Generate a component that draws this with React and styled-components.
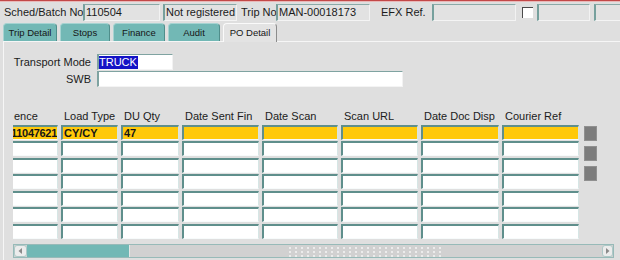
import React from "react";
import styled, { createGlobalStyle } from "styled-components";

const Global = createGlobalStyle`
  html, body { margin: 0; padding: 0; background: #dfdfdf; }
  body {
    width: 620px; height: 260px; overflow: hidden;
    font-family: "Liberation Sans", Arial, sans-serif;
  }
`;

const COLS = "45px 57px 58px 77px 76px 77px 78px 77px";

const Screen = styled.div`
  width: 620px;
  height: 260px;
  overflow: hidden;
  box-sizing: border-box;
  background: #dfdfdf;
  border-top: 1px solid #c24848;
  box-shadow: inset 0 1px 0 #e9b8b8;
  color: #1b1b1b;
  font-size: 11px;
`;

const TopBar = styled.div`
  display: flex;
  align-items: center;
  height: 17px;
  padding: 3px 0 0 4px;
  white-space: nowrap;
`;

const Label = styled.span`
  flex: none;
  width: ${(p) => p.$w}px;
  margin-left: ${(p) => p.$ml || 0}px;
  line-height: 17px;
  overflow: hidden;
`;

const Field = styled.div`
  flex: none;
  box-sizing: border-box;
  width: ${(p) => p.$w}px;
  margin-left: ${(p) => p.$ml || 0}px;
  height: 17px;
  padding-left: 1px;
  line-height: 15px;
  background: #e2e2e2;
  border-top: 1px solid #8aaaa8;
  border-left: 2px solid #76a09d;
  border-right: 1px solid #f2f2f2;
  border-bottom: 1px solid #f4f4f4;
  overflow: hidden;
`;

const Check = styled.div`
  flex: none;
  box-sizing: border-box;
  width: 11px;
  height: 11px;
  margin-left: ${(p) => p.$ml}px;
  background: #fff;
  border-top: 1px solid #4a4a4a;
  border-left: 1px solid #4a4a4a;
`;

const TabStrip = styled.div`
  display: flex;
  align-items: flex-end;
  gap: 3px;
  height: 18px;
  margin-top: 2px;
  padding-left: 3px;
`;

const Tab = styled.div`
  flex: none;
  box-sizing: border-box;
  width: ${(p) => p.$w}px;
  height: ${(p) => (p.$active ? 19 : 18)}px;
  margin-bottom: ${(p) => (p.$active ? -1 : 0)}px;
  border-radius: 4px 4px 0 0;
  background: ${(p) => (p.$active ? "#e3e3e3" : "#72b8b5")};
  border-top: 1px solid ${(p) => (p.$active ? "#fafafa" : "#a6d3d1")};
  border-left: 1px solid ${(p) => (p.$active ? "#fafafa" : "#a6d3d1")};
  border-right: 1px solid ${(p) => (p.$active ? "#8c8c8c" : "#4f8e8b")};
  display: flex;
  align-items: center;
  justify-content: center;
  font-size: 9.5px;
  color: #161616;
  padding-bottom: ${(p) => (p.$active ? 1 : 0)}px;
`;

const Panel = styled.div`
  margin-left: 3px;
  height: 240px;
  border-top: 1px solid #f6f6f6;
  border-left: 1px solid #f6f6f6;
`;

const Form = styled.div`
  display: grid;
  grid-template-columns: 87px auto;
  grid-auto-rows: 16px;
  column-gap: 6px;
  row-gap: 1px;
  margin-top: 12px;
`;

const FormLabel = styled.span`
  text-align: right;
  line-height: 16px;
  white-space: nowrap;
`;

const Input = styled.div`
  box-sizing: border-box;
  width: ${(p) => p.$w}px;
  height: 16px;
  background: #fff;
  border-top: 1px solid #7fa3a1;
  border-left: 2px solid #7fa3a1;
  border-right: 1px solid #f2f2f2;
  border-bottom: 1px solid #f4f4f4;
  padding-top: 1px;
  line-height: 13px;
`;

const Selected = styled.span`
  display: inline-block;
  background: #1313c6;
  color: #fff;
  padding-right: 1px;
`;

const Table = styled.div`
  margin: 21px 0 0 9px;
`;

const HeaderRow = styled.div`
  display: grid;
  grid-template-columns: ${COLS};
  column-gap: 3px;
  height: 16px;
  align-items: center;
`;

const HeaderCell = styled.span`
  padding-left: ${(p) => (p.$first ? 1 : 3)}px;
  white-space: nowrap;
  overflow: hidden;
`;

const Body = styled.div`
  display: flex;
  align-items: flex-start;
`;

const DataGrid = styled.div`
  display: grid;
  grid-template-columns: ${COLS};
  grid-auto-rows: 15px;
  column-gap: 3px;
  row-gap: 1.6px;
  padding-top: 0.5px;
`;

const Cell = styled.div`
  box-sizing: border-box;
  background: ${(p) => (p.$hl ? "#ffc90a" : "#ffffff")};
  border-top: 2px solid #5f8f8c;
  border-left: ${(p) => (p.$clipped ? "none" : "2px solid #5f8f8c")};
  border-right: 1px solid #d6e6e5;
  border-bottom: 1px solid #f7fbfb;
  display: flex;
  align-items: center;
  justify-content: ${(p) => (p.$clipped ? "flex-end" : "flex-start")};
  padding-left: ${(p) => (p.$clipped ? 0 : 1)}px;
  font-weight: bold;
  font-size: 11px;
  letter-spacing: ${(p) => (p.$clipped ? "-0.3px" : "0")};
  white-space: nowrap;
  overflow: hidden;
  color: #151515;
`;

const Indicators = styled.div`
  display: flex;
  flex-direction: column;
  gap: 5px;
  margin-left: 5px;
  padding-top: 2px;
`;

const Indicator = styled.div`
  box-sizing: border-box;
  width: 13px;
  height: 15px;
  background: #7c7c7c;
  border: 1px solid #909090;
`;

const ScrollBar = styled.div`
  display: flex;
  box-sizing: border-box;
  width: 601px;
  height: 14px;
  margin-top: 5px;
  background: #d1d1d1;
  border: 1px solid #97bab8;
`;

const ArrowBtn = styled.div`
  flex: none;
  box-sizing: border-box;
  width: ${(p) => p.$w}px;
  background: #ececec;
  border: 1px solid #aec8c7;
  border-radius: 3px;
  display: flex;
  align-items: center;
  justify-content: center;
`;

const Thumb = styled.div`
  flex: none;
  width: 102px;
  background: #72b8b5;
  border-right: 1px solid #e6e6e6;
`;

const Grip = styled.div`
  flex: none;
  width: 158px;
  margin-left: 157px;
  background-image: radial-gradient(circle, #ececec 0.7px, transparent 1.1px);
  background-size: 6px 4px;
  background-position: 0 1px;
`;

const Spacer = styled.div`
  flex: 1;
`;

const Arrow = ({ dir }) => (
  <svg width="5" height="6" viewBox="0 0 5 6">
    {dir === "left" ? (
      <polygon points="4,0 4,6 0.5,3" fill="#8a8a8a" />
    ) : (
      <polygon points="1,0 1,6 4.5,3" fill="#8a8a8a" />
    )}
  </svg>
);

const headers = [
  "ence",
  "Load Type",
  "DU Qty",
  "Date Sent Fin",
  "Date Scan",
  "Scan URL",
  "Date Doc Disp",
  "Courier Ref",
];

const firstRow = ["11047621", "CY/CY", "47", "", "", "", "", ""];

export default function App() {
  const rows = [firstRow];
  for (let i = 0; i < 6; i++) rows.push(Array(8).fill(""));
  return (
    <>
      <Global />
      <Screen>
        <TopBar>
          <Label $w={79}>Sched/Batch No</Label>
          <Field $w={77}>110504</Field>
          <Field $w={74} $ml={3}>Not registered</Field>
          <Label $w={35} $ml={4}>Trip No</Label>
          <Field $w={94}>MAN-00018173</Field>
          <Label $w={51} $ml={11}>EFX Ref.</Label>
          <Field $w={84} />
          <Check $ml={6} />
          <Field $w={53} $ml={4} />
          <Field $w={40} $ml={4} />
        </TopBar>
        <TabStrip>
          <Tab $w={54}>Trip Detail</Tab>
          <Tab $w={50}>Stops</Tab>
          <Tab $w={52}>Finance</Tab>
          <Tab $w={52}>Audit</Tab>
          <Tab $w={54} $active>PO Detail</Tab>
        </TabStrip>
        <Panel>
          <Form>
            <FormLabel>Transport Mode</FormLabel>
            <Input $w={76}>
              <Selected>TRUCK</Selected>
            </Input>
            <FormLabel>SWB</FormLabel>
            <Input $w={306} />
          </Form>
          <Table>
            <HeaderRow>
              {headers.map((h, i) => (
                <HeaderCell key={h} $first={i === 0}>
                  {h}
                </HeaderCell>
              ))}
            </HeaderRow>
            <Body>
              <DataGrid>
                {rows.map((r, ri) =>
                  r.map((v, ci) => (
                    <Cell key={`${ri}-${ci}`} $hl={ri === 0} $clipped={ci === 0}>
                      {v}
                    </Cell>
                  ))
                )}
              </DataGrid>
              <Indicators>
                <Indicator />
                <Indicator />
                <Indicator />
              </Indicators>
            </Body>
            <ScrollBar>
              <ArrowBtn $w={13}>
                <Arrow dir="left" />
              </ArrowBtn>
              <Thumb />
              <Grip />
              <Spacer />
              <ArrowBtn $w={11}>
                <Arrow dir="right" />
              </ArrowBtn>
            </ScrollBar>
          </Table>
        </Panel>
      </Screen>
    </>
  );
}
